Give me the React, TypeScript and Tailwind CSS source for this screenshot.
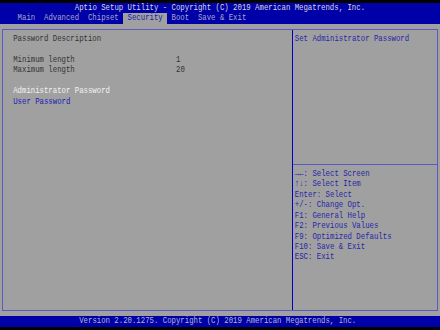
import React from "react";

const mono = { fontFamily: '"Liberation Mono", "DejaVu Sans Mono", monospace' };

function T({ children }: { children: React.ReactNode }) {
  return <span className="inline-block scale-y-[1.25]">{children}</span>;
}

export default function App() {
  const help = [
    "→←: Select Screen",
    "↑↓: Select Item",
    "Enter: Select",
    "+/-: Change Opt.",
    "F1: General Help",
    "F2: Previous Values",
    "F9: Optimized Defaults",
    "F10: Save & Exit",
    "ESC: Exit",
  ];
  return (
    <div
      className="w-[440px] h-[330px] bg-black flex flex-col pt-[2.8px] overflow-hidden text-[7.33px] leading-[10.45px] whitespace-pre"
      style={mono}
    >
      <div className="bg-[#0000a8] flex flex-col">
        <div className="h-[10.45px] pl-[74.8px] text-[#d8d8d8]">
          <T>Aptio Setup Utility - Copyright (C) 2019 American Megatrends, Inc.</T>
        </div>
        <div className="h-[10.45px] flex pl-[17.6px] text-[#a8a8c8]">
          <T>Main</T>
          <span className="ml-[8.8px]"><T>Advanced</T></span>
          <span className="ml-[8.8px]"><T>Chipset</T></span>
          <span className="ml-[4.4px] bg-[#a0a0a0] text-[#1818a8] px-[4.4px]"><T>Security</T></span>
          <span className="ml-[4.4px]"><T>Boot</T></span>
          <span className="ml-[8.8px]"><T>Save &amp; Exit</T></span>
        </div>
      </div>
      <div className="bg-[#a0a0a0] h-[292.6px] pt-[5px] pl-[2px]">
        <div className="w-[436px] h-[282.5px] border border-[#5a5ac0] flex">
          <div className="w-[290px] h-full border-r border-[#0000c0] pt-[4.45px] pl-[10.2px] flex flex-col text-[#333333]">
            <div className="h-[10.45px]"><T>Password Description</T></div>
            <div className="h-[10.45px]" />
            <div className="h-[10.45px] flex">
              <span className="w-[162.8px]"><T>Minimum length</T></span>
              <T>1</T>
            </div>
            <div className="h-[10.45px] flex">
              <span className="w-[162.8px]"><T>Maximum length</T></span>
              <T>20</T>
            </div>
            <div className="h-[10.45px]" />
            <div className="h-[10.45px] text-[#f4f4f4]"><T>Administrator Password</T></div>
            <div className="h-[10.45px] text-[#1a1ab8]"><T>User Password</T></div>
          </div>
          <div className="flex-1 flex flex-col text-[#2626a8]">
            <div className="h-[135.1px] border-b border-[#5a5ac0] pt-[4.45px] pl-[1.8px]">
              <T>Set Administrator Password</T>
            </div>
            <div className="pt-[4.2px] pl-[1.8px] flex flex-col">
              {help.map((h) => (
                <div key={h} className="h-[10.45px]">
                  <T>{h}</T>
                </div>
              ))}
            </div>
          </div>
        </div>
      </div>
      <div className="bg-[#0000a8] h-[10.45px] pl-[79.2px] text-[#b8b8c8]">
        <T>Version 2.20.1275. Copyright (C) 2019 American Megatrends, Inc.</T>
      </div>
    </div>
  );
}
